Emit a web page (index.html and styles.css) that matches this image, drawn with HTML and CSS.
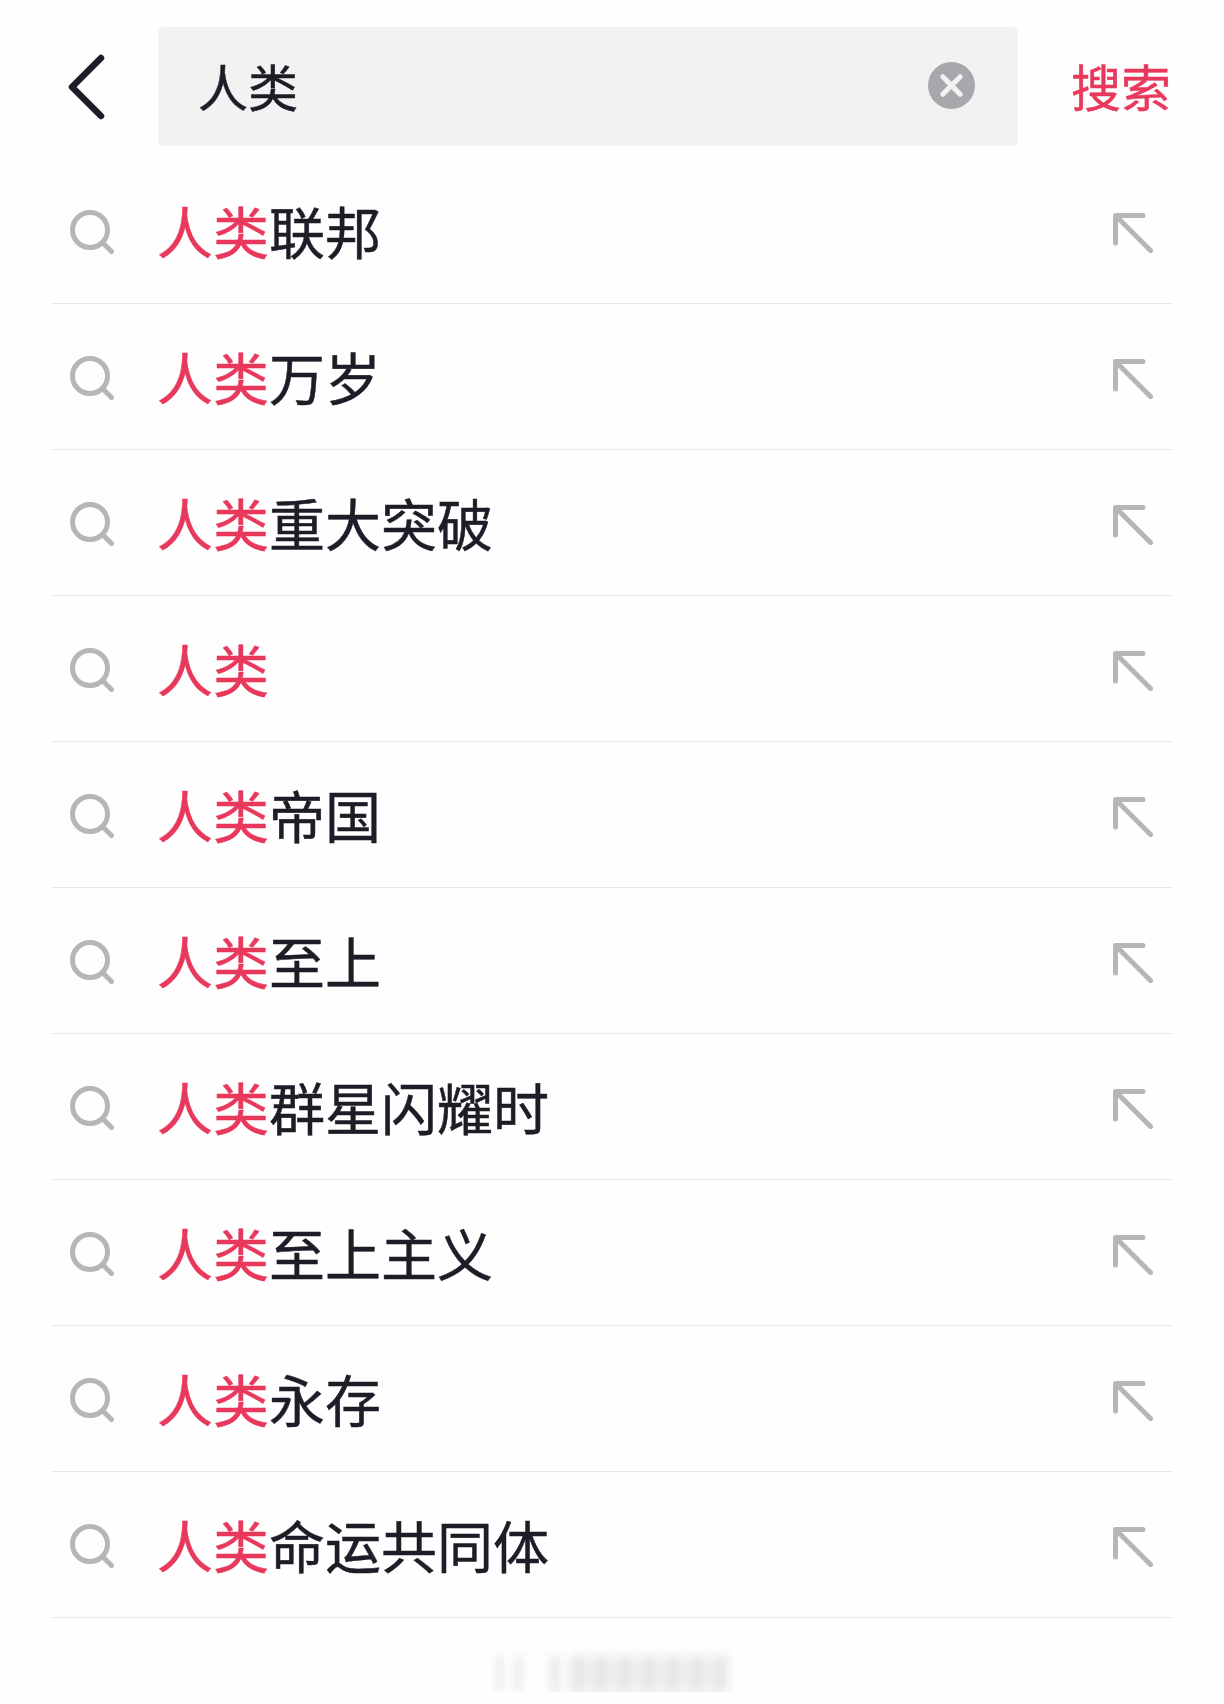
FILE: index.html
```html
<!DOCTYPE html>
<html lang="zh-CN">
<head>
  <meta charset="UTF-8" />
  <meta name="viewport" content="width=device-width, initial-scale=1" />
  <title>搜索</title>
  <link rel="stylesheet" href="styles.css">
</head>
<body>
  <svg width="0" height="0" class="defs">
    <symbol id="icon-search" viewBox="0 0 44 44">
      <circle cx="20" cy="20" r="17.5" fill="none" stroke="currentColor" stroke-width="5" />
      <path d="M32.5 32.5 L41.5 41.5" fill="none" stroke="currentColor" stroke-width="5" stroke-linecap="round" />
    </symbol>
    <symbol id="icon-fill" viewBox="0 0 40 40">
      <path d="M2.5 30 V2.5 H30" fill="none" stroke="currentColor" stroke-width="5" stroke-linecap="round" stroke-linejoin="round" />
      <path d="M3 3 L37.5 37.5" fill="none" stroke="currentColor" stroke-width="5" stroke-linecap="round" />
    </symbol>
  </svg>

  <header class="search-bar">
    <svg class="back" viewBox="0 0 38 66">
      <path d="M33 4 L4 33 L33 62" fill="none" stroke="currentColor" stroke-width="6.5" stroke-linecap="round" stroke-linejoin="round" />
    </svg>
    <div class="search-box">
      <span class="query">人类</span>
      <svg class="clear" viewBox="0 0 46 46">
        <circle cx="23" cy="23" r="23" fill="#a7a8ab" />
        <path d="M14.5 14.5 L31.5 31.5 M31.5 14.5 L14.5 31.5" stroke="#f2f2f3" stroke-width="5" stroke-linecap="round" />
      </svg>
    </div>
    <span class="search-btn">搜索</span>
  </header>

  <ul class="suggestions">
    <li class="row"><svg class="icon-search"><use href="#icon-search" /></svg><span class="term"><em>人类</em>联邦</span><svg class="icon-fill"><use href="#icon-fill" /></svg></li>
    <li class="row"><svg class="icon-search"><use href="#icon-search" /></svg><span class="term"><em>人类</em>万岁</span><svg class="icon-fill"><use href="#icon-fill" /></svg></li>
    <li class="row"><svg class="icon-search"><use href="#icon-search" /></svg><span class="term"><em>人类</em>重大突破</span><svg class="icon-fill"><use href="#icon-fill" /></svg></li>
    <li class="row"><svg class="icon-search"><use href="#icon-search" /></svg><span class="term"><em>人类</em></span><svg class="icon-fill"><use href="#icon-fill" /></svg></li>
    <li class="row"><svg class="icon-search"><use href="#icon-search" /></svg><span class="term"><em>人类</em>帝国</span><svg class="icon-fill"><use href="#icon-fill" /></svg></li>
    <li class="row"><svg class="icon-search"><use href="#icon-search" /></svg><span class="term"><em>人类</em>至上</span><svg class="icon-fill"><use href="#icon-fill" /></svg></li>
    <li class="row"><svg class="icon-search"><use href="#icon-search" /></svg><span class="term"><em>人类</em>群星闪耀时</span><svg class="icon-fill"><use href="#icon-fill" /></svg></li>
    <li class="row"><svg class="icon-search"><use href="#icon-search" /></svg><span class="term"><em>人类</em>至上主义</span><svg class="icon-fill"><use href="#icon-fill" /></svg></li>
    <li class="row"><svg class="icon-search"><use href="#icon-search" /></svg><span class="term"><em>人类</em>永存</span><svg class="icon-fill"><use href="#icon-fill" /></svg></li>
    <li class="row"><svg class="icon-search"><use href="#icon-search" /></svg><span class="term"><em>人类</em>命运共同体</span><svg class="icon-fill"><use href="#icon-fill" /></svg></li>
  </ul>

  <!-- blurred-out watermark at the bottom -->
  <div class="watermark">
    <span class="wm-first"></span>
    <span class="wm-chunk"></span>
    <span class="wm-rest"></span>
  </div>
</body>
</html>
```

FILE: styles.css
```css
* {
  box-sizing: border-box;
}
body {
  margin: 0;
  background: #fefefe;
  font-family: "Noto Sans CJK SC", "Noto Sans", sans-serif;
  color: #1c1d26;
}
.defs {
  display: block;
  height: 0;
}
.search-bar {
  display: flex;
  align-items: center;
  height: 158px;
  padding: 15px 0 0 68px;
}
.back {
  width: 38px;
  height: 66px;
  color: #1c1d26;
  flex: none;
}
.search-box {
  display: flex;
  align-items: center;
  justify-content: space-between;
  width: 860px;
  height: 119px;
  margin-left: 52px;
  padding: 0 43px 0 40px;
  background: #f2f2f3;
  border-radius: 6px;
  flex: none;
}
.query {
  font-size: 50px;
  line-height: 1;
  margin-top: -4px;
  -webkit-text-stroke: 0.5px currentColor;
}
.clear {
  width: 47px;
  height: 47px;
  margin-top: -2px;
}
.search-btn {
  margin-left: 53px;
  margin-top: -4px;
  font-size: 50px;
  line-height: 1;
  color: #e8385c;
  -webkit-text-stroke: 0.5px currentColor;
}
.suggestions {
  list-style: none;
  margin: 0;
  padding: 0;
  margin-left: 52px;
  width: 1120px;
}
.row {
  display: flex;
  align-items: center;
  height: 146px;
  padding: 0 19px 0 18px;
  border-bottom: 1px solid #e9e9ea;
}
.icon-search {
  width: 44px;
  height: 44px;
  margin-top: 2px;
  color: #b5b6b8;
  flex: none;
}
.term {
  margin-left: 43px;
  font-size: 56px;
  line-height: 1;
  margin-bottom: 2px;
  flex: 1;
  -webkit-text-stroke: 0.5px currentColor;
}
.term em {
  font-style: normal;
  color: #e8385c;
}
.icon-fill {
  width: 40px;
  height: 40px;
  margin-top: 4px;
  color: #b5b6b8;
  flex: none;
}
.watermark {
  display: flex;
  margin: 38px 0 0 498px;
  height: 36px;
  filter: blur(5px);
}
.wm-first {
  width: 22px;
  background: linear-gradient(90deg, #d8d8d8 0 4px, #ffffff 4px 18px, #d8d8d8 18px);
}
.wm-chunk {
  width: 10px;
  margin-left: 30px;
  background: #e9e9e9;
}
.wm-rest {
  width: 158px;
  margin-left: 10px;
  background: repeating-linear-gradient(90deg, #e6e6e6 0 14px, #f2f2f2 14px 24px);
}
```
